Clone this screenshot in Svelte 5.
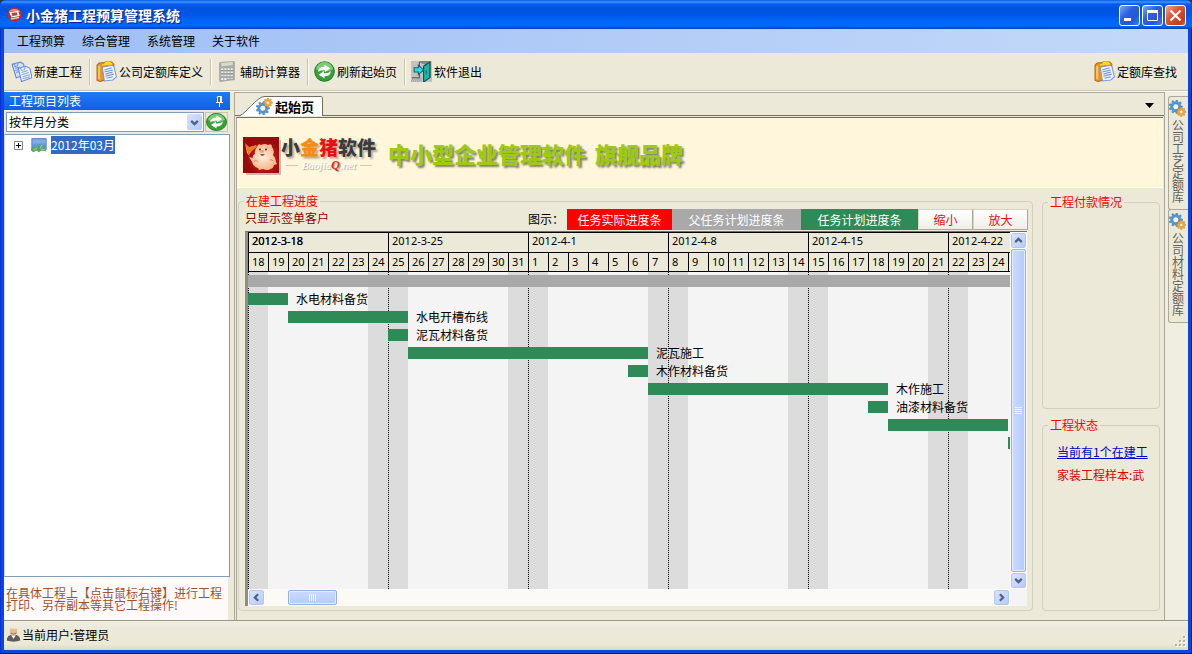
<script>
  const menus = ['工程预算', '综合管理', '系统管理', '关于软件'];
  const tools = [
    { icon: 'docs', label: '新建工程' },
    { icon: 'clip', label: '公司定额库定义' },
    { icon: 'calc', label: '辅助计算器' },
    { icon: 'refresh', label: '刷新起始页' },
    { icon: 'exit', label: '软件退出' }
  ];
  const docks = ['公司工艺定额库', '公司材料定额库'];
  const DAY = 20;
  const weeks = [
    { label: '2012-3-18', days: [18, 19, 20, 21, 22, 23, 24] },
    { label: '2012-3-25', days: [25, 26, 27, 28, 29, 30, 31] },
    { label: '2012-4-1', days: [1, 2, 3, 4, 5, 6, 7] },
    { label: '2012-4-8', days: [8, 9, 10, 11, 12, 13, 14] },
    { label: '2012-4-15', days: [15, 16, 17, 18, 19, 20, 21] },
    { label: '2012-4-22', days: [22, 23, 24, ''] }
  ];
  const tasks = [
    { name: '水电材料备货', start: 0, days: 2 },
    { name: '水电开槽布线', start: 2, days: 6 },
    { name: '泥瓦材料备货', start: 7, days: 1 },
    { name: '泥瓦施工', start: 8, days: 12 },
    { name: '木作材料备货', start: 19, days: 1 },
    { name: '木作施工', start: 20, days: 12 },
    { name: '油漆材料备货', start: 31, days: 1 },
    { name: '', start: 32, days: 6 },
    { name: '', start: 38, days: 1 }
  ];

  // Outline of a toothed wheel centred on cx, cy.
  function wheel(cx, cy, outer, inner, teeth) {
    const points = [];
    for (let i = 0; i < teeth; i++) {
      for (const [part, r] of [[-0.3, inner], [-0.17, outer], [0.17, outer], [0.3, inner]]) {
        const a = ((i + part) / teeth) * Math.PI * 2;
        points.push((cx + r * Math.cos(a)).toFixed(1) + ' ' + (cy + r * Math.sin(a)).toFixed(1));
      }
    }
    return 'M' + points.join('L') + 'z';
  }
</script>

{#snippet gears(bx, by, sx, sy)}
  <path d={wheel(bx, by, 8, 6, 9)} fill="#4f9ad8" stroke="#2f6fb0" stroke-width=".5" />
  <circle cx={bx} cy={by} r="3.600" fill="#f4f4ea" stroke="#2f74b5" stroke-width=".8" />
  <path d={wheel(sx, sy, 5.4, 4.1, 8)} fill="#f4ab36" stroke="#c9771a" stroke-width=".5" />
  <circle cx={sx} cy={sy} r="2" fill="#fff6dc" stroke="#c9771a" stroke-width=".5" />
{/snippet}

{#snippet icon(name, size)}
  <svg class="icon" width={size} height={size} viewBox="0 0 20 20" aria-hidden="true">
    {#if name === 'docs'}
      <path d="M1 3l8-2 3 2 2 10-9 3z" fill="#d3e3ff" stroke="#5d83d8" />
      <path d="M3 2.500l1 3 2-1 1-3M4 7l4-1M4 9l4-1M5 11l3-1" fill="none" stroke="#6d94e4" />
      <path d="M7 7l7-2 4 2 2 9-10 3.500z" fill="#f5f9ff" stroke="#6286d6" />
      <path d="M9 6.500l1 2.500 3-1 .5-3M10 11l6-2M10 13l7-2M11 15l7-2M11 17l7-2" fill="none" stroke="#7ca0e8" />
    {:else if name === 'clip'}
      <path d="M1 4l2-2 12-1 2 2-1 13L4 19.500l-3-1z" fill="#e99325" stroke="#b26a17" />
      <path d="M2 5v12l2 1V4z" fill="#ffc45b" />
      <path d="M6 6l9-2 2 1 2.500 10-3.500 3-8 1z" fill="#f3f8ff" stroke="#7799d9" />
      <path d="M8 8.500l7-2M8 10.500l8-2M9 12.500l7-2M9 14.500l8-2M10 16.500l6-1.500" fill="none" stroke="#6b8fe0" />
      <path d="M5 3l3-1 1-2h4l1 1 2 1v2L5 5z" fill="#ffd62c" stroke="#b78c13" stroke-width=".7" />
    {:else if name === 'calc'}
      <path d="M3 1l13-1 1 1v17l-14 2-1-1V2z" fill="#a9a9a5" />
      <path d="M4 2l11-1v3L4 5z" fill="#d8dacb" />
      <path d="M4 7h2v2H4zM7 7h2v2H7zM10 7h2v2h-2zM13 7h2v2h-2zM4 10h2v2H4zM7 10h2v2H7zM10 10h2v2h-2zM13 10h2v2h-2zM4 13h2v2H4zM7 13h2v2H7zM10 13h2v2h-2zM13 13h2v2h-2zM4 16h2v2H4zM7 16h2v2H7zM10 16h2v1h-2zM13 16h2v1h-2z" fill="#eeeeec" />
      <path d="M6 9H4M9 9H7M12 9h-2M15 9h-2M6 12H4M9 12H7M12 12h-2M15 12h-2M6 15H4M9 15H7M12 15h-2M15 15h-2" stroke="#777" stroke-width=".7" />
    {:else if name === 'refresh'}
      <circle cx="10" cy="10" r="9.300" fill="#38a03a" stroke="#23812a" />
      <path d="M2 8a8 7 0 0 1 16 0q-8 4-16 0" fill="#7dcc75" />
      <path d="M4 10.500q0-5 6-5V3.500l5.500 3.500-5 3.500V8.500q-4-.5-6.500 2zM16 9.500q0 5-6 5v2L4.500 13l5-3.500v2q4 .5 6.500-2z" fill="#fff" />
    {:else if name === 'exit'}
      <path d="M0 0h20v20H0z" fill="#c2c2c0" />
      <path d="M8 1h10v15" fill="none" stroke="#444" />
      <path d="M8 1v5M8 12v4H1" fill="none" stroke="#555" />
      <path d="M9 2h7v13h-3V3z" fill="#888" />
      <path d="M12 5l6-4v15l-6 4z" fill="#1bb5aa" stroke="#08514f" />
      <path d="M3 6.500h4V4l5 4.500-5 4.500v-2.500H3z" fill="#28e0df" stroke="#156572" />
      <path d="M14 9h1v3h-1z" fill="#073" />
      <path d="M1 17h9M0 19h10" stroke="#888" stroke-dasharray="1 1" />
    {:else if name === 'gear'}
      {@render gears(8, 12, 14, 5.5)}
    {:else if name === 'dockgear'}
      {@render gears(8, 8, 14.4, 14)}
    {:else if name === 'app'}
      <circle cx="10" cy="10" r="9.500" fill="#c9252b" />
      <path d="M2 7a9 8 0 0 1 16 0q-8-4-16 0" fill="#ee9490" />
      <path d="M3 7l12-2 2 7-11 2z" fill="#fff" />
      <path d="M6 8l7-1 1 4-7 1z" fill="#c33b3e" />
      <path d="M5 16l11-2" stroke="#f4c4c1" stroke-width="2" />
    {:else if name === 'image'}
      <path d="M1 2h18v14H1z" fill="#6598e8" stroke="#5376bd" />
      <path d="M2 3h16v5H2z" fill="#83aaf0" />
      <path d="M0 17q0-6 6-5l2 2q2-6 4-6l1 4 5-1-2 4 4 3-7-1-3 2-3-2-4 2z" fill="#57a463" />
      <path d="M3 16l5-2M12 15l5 1M13 10l-1 4" stroke="#b7dcaf" fill="none" />
    {:else if name === 'user'}
      <path d="M1 18q0-8 9-8t9 8q-9 3-18 0" fill="#5c5c5c" />
      <path d="M7 11l3 5 3-5z" fill="#fff" />
      <path d="M5 5q0-4 5-4t5 4q0 6-5 7-5-1-5-7" fill="#e5bc92" />
      <path d="M6 3q4-4 8 0-4-1-8 0" fill="#f8e5c8" />
      <path d="M6 8q4 3 8 0" stroke="#8b5139" fill="none" />
    {:else if name === 'up'}
      <path d="M4 13l6-6 6 6" fill="none" stroke="#4d6185" stroke-width="4" />
    {:else if name === 'down'}
      <path d="M4 7l6 6 6-6" fill="none" stroke="#4d6185" stroke-width="4" />
    {:else if name === 'left'}
      <path d="M13 4l-6 6 6 6" fill="none" stroke="#4d6185" stroke-width="4" />
    {:else if name === 'right'}
      <path d="M7 4l6 6-6 6" fill="none" stroke="#4d6185" stroke-width="4" />
    {/if}
  </svg>
{/snippet}

<div class="window">
  <header class="title">
    {@render icon('app', 15)}
    <h1>小金猪工程预算管理系统</h1>
    <button class="cap" aria-label="最小化"><svg viewBox="0 0 19 19"><path d="M4 12h7v3H4z" fill="#fff" /></svg></button>
    <button class="cap" aria-label="最大化"><svg viewBox="0 0 19 19"><path d="M4.500 4.500h10v10h-10z" fill="none" stroke="#fff" /><path d="M4 4h11v3H4z" fill="#fff" /></svg></button>
    <button class="cap close" aria-label="关闭"><svg viewBox="0 0 19 19"><path d="M4.500 4.500l10 10M14.500 4.500l-10 10" stroke="#fff" stroke-width="2.200" /></svg></button>
  </header>

  <div class="inner">
    <nav class="menubar">
      {#each menus as m}<button>{m}</button>{/each}
    </nav>
    <div class="toolbar">
      {#each tools as t, i}
        {#if i}<span class="sep"></span>{/if}
        <button>{@render icon(t.icon, 21)}{t.label}</button>
      {/each}
      <button class="find">{@render icon('clip', 21)}定额库查找</button>
    </div>

    <div class="body">
      <aside class="side">
        <div class="sidehead">
          <span>工程项目列表</span>
          <button aria-label="自动隐藏"><svg width="9" height="11" viewBox="0 0 9 11"><path d="M2.500 6V.5h4V6M5.500 1v5M1 6.500h7M4.500 7v4" fill="none" stroke="#fff" /></svg></button>
        </div>
        <div class="filter">
          <div class="combo">
            <select aria-label="分类方式"><option>按年月分类</option></select>
            <span class="drop">{@render icon('down', 11)}</span>
          </div>
          <button class="reload" aria-label="刷新">
            <svg class="icon" width="21" height="18" viewBox="0 0 21 18" aria-hidden="true">
              <ellipse cx="10.500" cy="9" rx="10" ry="8.500" fill="#38a03a" stroke="#23812a" />
              <path d="M2 7q2-6 8.500-6T19 7q-8.500 4-17 0" fill="#7dcc75" />
              <path d="M4 9.500q1-5 6.500-5V2.500L16 6l-5 3.500v-2q-4-.5-7 2zM17 8.500q-1 5-6.500 5v2L5 12l5-3.500v2q4 .5 7-2z" fill="#fff" />
            </svg>
          </button>
        </div>
        <div class="tree">
          <div class="node">
            <button class="plus" aria-label="展开"><svg width="9" height="9" viewBox="0 0 9 9"><path d="M.5.5h8v8h-8z" fill="#fff" stroke="#848484" /><path d="M2 4.500h5M4.500 2v5" stroke="#000" /></svg></button>
            {@render icon('image', 16)}
            <span class="sel">2012年03月</span>
          </div>
        </div>
        <p class="hint">在具体工程上【点击鼠标右键】进行工程打印、另存副本等其它工程操作!</p>
      </aside>

      <main class="main">
        <div class="tabs">
          <button class="tab">
            <svg class="slant" width="24" height="20" viewBox="0 0 24 20" aria-hidden="true"><path d="M0 20C5 18 17 1 24 .5V20z" fill="#fff" /><path d="M0 19.500C5 18 17 1 24 .5" fill="none" stroke="#6e6e64" /></svg>
            <span class="tabbody">{@render icon('gear', 17)}起始页</span>
          </button>
          <button class="more" aria-label="页面列表"><svg width="9" height="5" viewBox="0 0 9 5"><path d="M0 0h9L4.500 5z" /></svg></button>
        </div>
        <div class="page">
          <div class="banner">
            <svg class="pig" width="38" height="38" viewBox="0 0 38 38" aria-hidden="true">
              <defs>
                <radialGradient id="red" cx=".6" cy=".6"><stop offset="0" stop-color="#e02a1c" /><stop offset="1" stop-color="#980b0d" /></radialGradient>
                <radialGradient id="skin"><stop offset="0" stop-color="#fff0dd" /><stop offset="1" stop-color="#f6b78c" /></radialGradient>
              </defs>
              <path d="M3 3h35v35H3z" fill="#8a8272" opacity=".5" />
              <path d="M0 0h36v36H0z" fill="url(#red)" />
              <path d="M14 10q1-4 4-2 4-2 7 0 4-2 4 2 3 4 1 8 3 3 3 7l1 2-3 1q-1 4-4 4l-1 1h-3l-3-1-4 1-1-2q-5-1-6-6l-3-5 4 1q-1-3 2-4-1-4 2-7z" fill="url(#skin)" />
              <path d="M2 6l4 4 7-2 1 2-5 4-3 4z" fill="#ee7c25" />
              <path d="M2 6l4 12 1 2-3-4z" fill="#ffb052" />
              <circle cx="17" cy="12.500" r=".9" fill="#39190c" /><circle cx="23" cy="12.500" r=".9" fill="#39190c" />
              <ellipse cx="19" cy="14.500" rx="2.200" ry="1.400" fill="#f1a080" />
              <path d="M17 17q2 4 5 0z" fill="#b2463b" />
              <path d="M11 24q3-1 4 1M27 23q2-1 3 1" fill="none" stroke="#d98762" />
            </svg>
            <div class="brand">
              <div class="name">小<b class="or">金</b><b class="rd">猪</b>软件</div>
              <div class="sub"><i></i><span>Baojia<b>Q</b>.net</span><i></i></div>
            </div>
            <div class="slogan"><span>中小型企业管理软件</span> <span>旗舰品牌</span></div>
          </div>

          <div class="content">
            <fieldset class="progress">
              <legend>在建工程进度</legend>
              <div class="keys">
                <a href="#signed">只显示签单客户</a>
                <span class="lab">图示：</span>
                <span class="key actual">任务实际进度条</span>
                <span class="key parent">父任务计划进度条</span>
                <span class="key plan">任务计划进度条</span>
                <button>缩小</button>
                <button>放大</button>
              </div>
              <div class="gantt">
                <div class="view">
                  <div class="weeks">
                    {#each weeks as w, i}
                      <div class="week">
                        <div class="wl" class:current={i === 0}>{w.label}</div>
                        <div class="days">{#each w.days as d}<span>{d}</span>{/each}</div>
                      </div>
                    {/each}
                  </div>
                  <div class="chart">
                    <div class="summary"></div>
                    {#each tasks as t}
                      <div class="row">
                        <span class="bar" style:margin-left="{t.start * DAY}px" style:width="{t.days * DAY}px"></span>
                        <span class="tn">{t.name}</span>
                      </div>
                    {/each}
                  </div>
                </div>
                <div class="vbar">
                  <button aria-label="向上">{@render icon('up', 11)}</button>
                  <div class="vthumb"><svg width="7" height="8" viewBox="0 0 7 8"><path d="M0 .5h7M0 2.500h7M0 4.500h7M0 6.500h7" stroke="#eef4ff" /></svg></div>
                  <button aria-label="向下">{@render icon('down', 11)}</button>
                </div>
                <div class="hbar">
                  <button aria-label="向左">{@render icon('left', 11)}</button>
                  <div class="hthumb"><svg width="8" height="7" viewBox="0 0 8 7"><path d="M.5 0v7M2.500 0v7M4.500 0v7M6.500 0v7" stroke="#eef4ff" /></svg></div>
                  <button aria-label="向右">{@render icon('right', 11)}</button>
                </div>
              </div>
            </fieldset>

            <div class="right">
              <fieldset class="pay"><legend>工程付款情况</legend></fieldset>
              <fieldset class="state">
                <legend>工程状态</legend>
                <a class="cur" href="#current">当前有1个在建工</a>
                <a class="sample" href="#sample">家装工程样本:武</a>
              </fieldset>
            </div>
          </div>
        </div>
      </main>

      <div class="dock">
        {#each docks as d}
          <button>{@render icon('dockgear', 17)}<span>{d}</span></button>
        {/each}
      </div>
    </div>

    <footer class="status">
      {@render icon('user', 15)}
      <span>当前用户:管理员</span>
      <svg class="grip" width="12" height="12" viewBox="0 0 12 12" aria-hidden="true"><path d="M9 1h2v2H9zM5 5h2v2H5zM9 5h2v2H9zM1 9h2v2H1zM5 9h2v2H5zM9 9h2v2H9z" fill="#fff" /><path d="M8 0h2v2H8zM4 4h2v2H4zM8 4h2v2H8zM0 8h2v2H0zM4 8h2v2H4zM8 8h2v2H8z" fill="#b4b09c" /></svg>
    </footer>
  </div>
</div>

<style>
  :global(body) { background: #26365c; }
  .window, .window * { box-sizing: border-box; }
  .window {
    min-height: 100vh;
    display: flex;
    flex-direction: column;
    font: 12px/16px "Noto Sans CJK SC", sans-serif;
    color: #000;
    background: #0a48dc;
    box-shadow: inset -1px -1px 0 #001a8c, inset 1px 0 0 #0831d9;
    border-radius: 6px 6px 0 0;
    overflow: hidden;
  }
  button {
    font: inherit;
    color: inherit;
    margin: 0;
    padding: 0;
    border: 0;
    background: none;
    display: flex;
    align-items: center;
    justify-content: center;
  }
  .icon { display: block; flex: none; }

  .title {
    height: 29px;
    display: flex;
    align-items: center;
    gap: 2px;
    padding: 2px 6px 0 7px;
    background: linear-gradient(#0a5ade 0, #3a94ff 2px, #0a5df0 4px, #0053e1 8px, #0056e8 15px, #0066fb 21px, #0068ff 26px, #0040b8 29px);
  }
  .title .icon { margin-bottom: 3px; }
  h1 {
    flex: 1;
    margin: 0 0 2px 2px;
    font-size: 14px;
    line-height: 20px;
    font-weight: 700;
    color: #fff;
    text-shadow: 1px 1px 1px #0a1883;
  }
  .cap {
    width: 21px;
    height: 21px;
    border: 1px solid #fff;
    border-radius: 3px;
    background: linear-gradient(135deg, #7fa5f5, #2a60e0 40%, #2457d8 70%, #3f7bf3);
  }
  .cap svg { width: 19px; height: 19px; flex: none; }
  .close { background: linear-gradient(135deg, #f0a48e, #dc5732 40%, #c63c17 80%, #d9603a); }

  .inner {
    flex: 1;
    display: flex;
    flex-direction: column;
    margin: 0 4px 4px;
    background: #ece9d8;
  }
  .menubar {
    height: 24px;
    display: flex;
    gap: 17px;
    padding-left: 13px;
    background: linear-gradient(90deg, #9ebef5, #c4d9f9);
  }
  .toolbar {
    height: 38px;
    display: flex;
    align-items: center;
    gap: 5px;
    padding: 0 11px 0 7px;
    border-bottom: 1px solid #c5c2b2;
  }
  .toolbar button { gap: 2px; }
  .sep { width: 2px; height: 26px; margin: 0 0 0 2px; background: linear-gradient(90deg, #c5c2b2 50%, #fff 50%); }
  .toolbar .find { margin-left: auto; }

  .body { flex: 1; display: flex; border-top: 1px solid #fff; }
  .side { width: 226px; display: flex; flex-direction: column; }
  .sidehead {
    height: 18px;
    display: flex;
    align-items: center;
    justify-content: space-between;
    padding: 0 6px 0 5px;
    color: #fff;
    background: linear-gradient(#1f7af5, #0f5fe6);
  }
  .filter { display: flex; gap: 1px; padding: 2px; height: 24px; }
  .combo {
    flex: 1;
    display: flex;
    position: relative;
    border: 1px solid #7f9db9;
    background: #fff;
  }
  select {
    flex: 1;
    appearance: none;
    border: 0;
    padding: 0 20px 0 2px;
    background: #fff;
    color: #000;
    font: inherit;
    line-height: 16px;
  }
  .drop {
    position: absolute;
    right: 1px;
    top: 1px;
    bottom: 1px;
    width: 15px;
    display: flex;
    align-items: center;
    justify-content: center;
    pointer-events: none;
    border-radius: 2px;
    background: linear-gradient(135deg, #d6e2ff, #b4c8f8);
  }
  .reload { width: 23px; border: 1px solid #c9c6b4; }
  .tree {
    flex: 1;
    padding: 1px 0 0 9px;
    background: #fff;
    border: 1px solid #7f9db9;
    border-left-color: #c9d4e0;
  }
  .node { height: 18px; display: flex; align-items: center; }
  .plus { margin-right: 8px; }
  .sel { margin-left: 4px; line-height: 18px; color: #fff; background: #316ac5; }
  .hint {
    height: 43px;
    margin: 0 1px 0 0;
    padding: 10px 4px 0 2px;
    line-height: 12px;
    color: #a0522d;
    background: #fffafa;
    border-right: 1px solid #ece9d8;
  }

  .main {
    flex: 1;
    min-width: 0;
    display: flex;
    flex-direction: column;
    margin-left: 4px;
    border: 1px solid #aca899;
    border-width: 1px 1px 0;
  }
  .tabs { height: 23px; display: flex; align-items: flex-end; justify-content: space-between; padding: 0 10px 0 5px; border-bottom: 1px solid #716f64; }
  .tab { height: 20px; margin-bottom: -1px; font-size: 13px; font-weight: 700; }
  .slant { display: block; }
  .tabbody {
    height: 20px;
    display: flex;
    align-items: center;
    gap: 2px;
    margin-left: -8px;
    padding-right: 8px;
    border-top: 1px solid transparent;
    border-right: 1px solid #716f64;
    border-radius: 0 3px 0 0;
    background: linear-gradient(#716f64 0 0) 8px 0 / 100% 1px no-repeat border-box, linear-gradient(90deg, transparent 8px, #fff 8px) border-box;
  }
  .more { margin-bottom: 7px; }
  .page { flex: 1; display: flex; flex-direction: column; margin: 1px 1px 0; border-top: 1px solid #716f64; border-left: 1px solid #aca899; }
  .banner {
    height: 70px;
    display: flex;
    padding: 19px 0 0 6px;
    background: #fff6dc;
    border-bottom: 1px solid #fff;
  }
  .pig { flex: none; }
  .brand { width: 96px; }
  .name { display: flex; font-size: 19px; line-height: 20px; font-weight: 900; color: #3b3b3b; text-shadow: 2px 2px 2px #b3ab97; }
  .name b { font-weight: 900; }
  .name .or { color: #f78c10; }
  .name .rd { color: #f00c10; }
  .sub { display: flex; align-items: center; justify-content: center; gap: 4px; height: 16px; font: italic 11px/16px "Liberation Serif", serif; color: #fff; text-shadow: 1px 1px 1px #a49d89; }
  .sub b { color: #e8281c; font-size: 12px; }
  .sub i { width: 12px; height: 1px; background: #cfc8b4; }
  .slogan { display: flex; gap: 9px; margin: 1px 0 0 11px; font-size: 22px; line-height: 30px; font-weight: 900; color: #9ccb12; text-shadow: 2px 2px 2px #837e66; white-space: nowrap; }

  .content { flex: 1; display: flex; gap: 9px; padding: 5px 3px 9px 1px; }
  fieldset {
    margin: 0;
    padding: 0;
    min-width: 0;
    display: flex;
    flex-direction: column;
    border: 1px solid #d0d0bf;
    border-radius: 4px;
  }
  legend { margin-left: 5px; padding: 0 2px; color: #f00; line-height: 16px; }
  .progress { flex: 1; padding: 0 5px 4px 6px; }
  .progress legend { margin-left: -1px; }
  .keys { flex: none; height: 22px; display: flex; margin-right: -1px; line-height: 22px; }
  .keys a { margin-right: auto; line-height: 18px; color: #8b0000; text-decoration: none; }
  .lab { margin-right: 3px; line-height: 20px; }
  .key { text-align: center; color: #fff; height: 21px; line-height: 21px; }
  .actual { width: 105px; background: #f00; }
  .parent { width: 129px; background: #a9a9a9; }
  .plan { width: 117px; background: #2e8b57; }
  .keys button { width: 55px; height: 21px; color: #e01010; border: 1px solid #aca899; border-left-color: #d8d5c6; border-top-color: #d8d5c6; background: linear-gradient(#fff, #f0eee6); }

  .gantt {
    flex: 1;
    min-height: 0;
    display: grid;
    grid-template: minmax(0, 1fr) 17px / minmax(0, 1fr) 17px;
    border: 1px solid #716f64;
    border-width: 1px 0 0 3px;
    border-left-color: #8f8d84;
    background: #f4f4f4;
  }
  .view { display: flex; flex-direction: column; overflow: hidden; }
  .weeks { display: flex; height: 40px; background: #ece9d8; border: 1px solid #000; border-width: 1px 0; }
  .week { flex: none; width: 140px; font: 11px/16px "Noto Sans", sans-serif; }
  .wl { height: 19px; padding: 0 0 0 3px; border-left: 1px solid #000; }
  .wl.current { text-shadow: 0 0 0 #000; }
  .days { display: flex; width: 140px; height: 19px; border-top: 1px solid #000; }
  .days span { width: 20px; line-height: 18px; padding-left: 3px; border-left: 1px solid #000; }
  .chart {
    flex: 1;
    overflow: hidden;
    position: relative;
    background: repeating-linear-gradient(90deg, #dcdcdc 0 20px, #f4f4f4 20px 120px, #dcdcdc 120px 140px);
  }
  .chart::before {
    content: "";
    position: absolute;
    inset: 0;
    background: repeating-linear-gradient(90deg, #000 0 1px, transparent 1px 140px);
    mask: repeating-linear-gradient(#000 0 1px, transparent 1px 2px);
  }
  .summary { position: relative; height: 12px; margin: 3px 0; background: #a9a9a9; }
  .row { position: relative; display: flex; align-items: center; height: 18px; white-space: nowrap; }
  .bar { flex: none; height: 12px; background: #2e8b57; }
  .tn { margin-left: 8px; }

  .vbar, .hbar { display: flex; background: #fbfaf5; }
  .vbar { flex-direction: column; }
  .vbar button, .hbar button { flex: none; width: 17px; height: 17px; border: 1px solid #fff; border-radius: 3px; background: linear-gradient(135deg, #dbe6ff, #b5c9f7); box-shadow: inset 0 0 0 1px #b3c6ee; }
  .vthumb, .hthumb { display: flex; align-items: center; justify-content: center; border: 1px solid #96b0e6; border-radius: 2px; box-shadow: inset 0 0 0 1px #e4ecff; }
  .vthumb { flex: 1; width: 15px; margin: 0 1px; background: linear-gradient(90deg, #cbdbff, #b6cbfc); }
  .hthumb { width: 49px; height: 15px; margin: 1px auto 1px 23px; background: linear-gradient(#cbdbff, #b6cbfc); }

  .right { width: 118px; display: flex; flex-direction: column; gap: 8px; padding-top: 1px; }
  .pay { flex: 215; }
  .state { flex: 193; }
  .state a { margin: 0 0 7px 14px; white-space: nowrap; }
  .state .cur { margin-top: 11px; color: #0000d0; }
  .state .sample { color: #e00000; text-decoration: none; }

  .dock { width: 23px; padding: 4px 0 0 3px; background: #f0eee1; }
  .dock button { width: 20px; height: 114px; flex-direction: column; justify-content: flex-start; gap: 2px; padding: 3px 2px 0 0; border: 1px solid #aca899; border-right: 0; border-radius: 3px 0 0 3px; background: #ece9d8; }
  .dock button + button { margin-top: -1px; }
  .dock span { writing-mode: vertical-rl; color: #666259; }

  .status {
    height: 30px;
    display: flex;
    align-items: center;
    gap: 1px;
    padding: 0 1px 2px 2px;
    border-top: 1px solid #9a9788;
    background: linear-gradient(#f0eee2, #ece9d8 30%, #ece9d8 80%, #dcd9c4);
  }
  .grip { margin-left: auto; align-self: flex-end; }
</style>
